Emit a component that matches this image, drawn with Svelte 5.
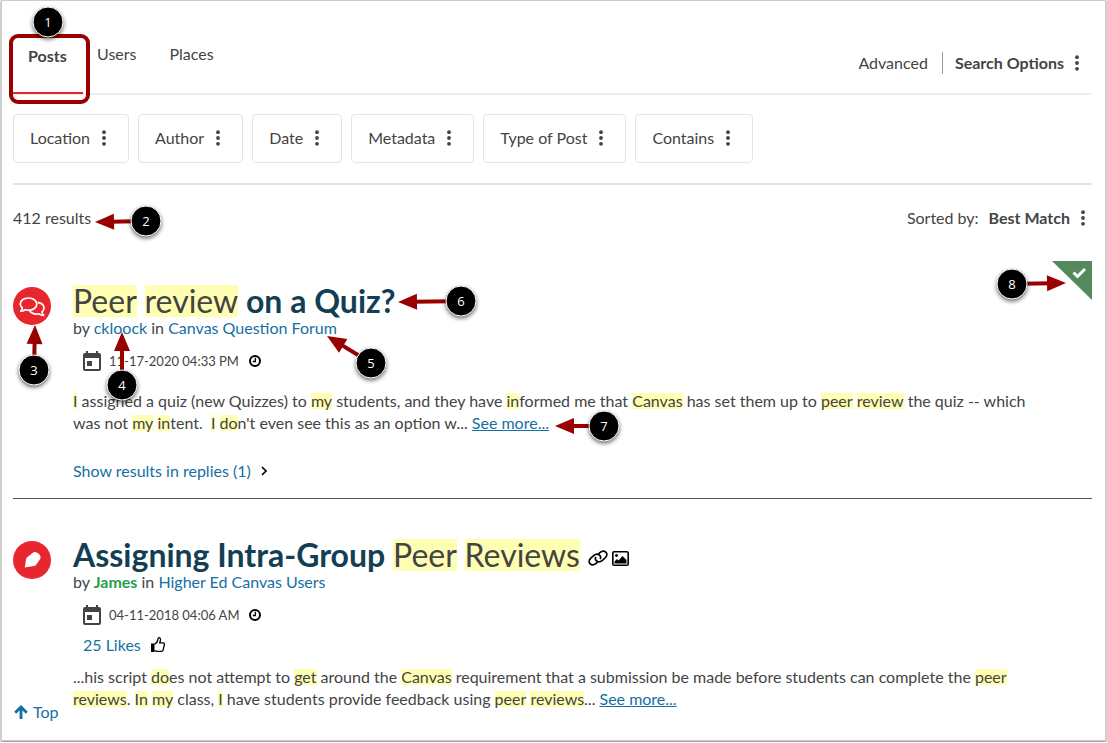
<script>
	const filters = ['Location', 'Author', 'Date', 'Metadata', 'Type of Post', 'Contains'];

	// n: number, cx/cy: badge centre, tx/ty: arrow tip
	const callouts = [
		{ n: 1, cx: 48, cy: 22 },
		{ n: 2, cx: 146, cy: 221, tx: 95, ty: 222 },
		{ n: 3, cx: 34, cy: 370, tx: 35, ty: 325 },
		{ n: 4, cx: 122, cy: 385, tx: 122, ty: 332 },
		{ n: 5, cx: 371, cy: 363, tx: 327, ty: 336 },
		{ n: 6, cx: 461, cy: 301, tx: 398, ty: 302 },
		{ n: 7, cx: 604, cy: 426, tx: 555, ty: 426 }
	];

	// text wrapped in [brackets] is a search hit
	const split = (text) =>
		text
			.split(/(\[[^\]]*\])/)
			.filter((part) => part)
			.map((part) => ({ hit: part[0] === '[', text: part.replace(/[[\]]/g, '') }));

	const angle = (c) => (Math.atan2(c.ty - c.cy, c.tx - c.cx) * 180) / Math.PI;
	const reach = (c) => Math.hypot(c.tx - c.cx, c.ty - c.cy);
</script>

{#snippet marked(text)}{#each split(text) as part}{#if part.hit}<mark>{part.text}</mark>{:else}{part.text}{/if}{/each}{/snippet}

{#snippet dots()}
	<svg class="dots" width="6" height="16" viewBox="0 0 6 16" aria-hidden="true">
		<circle cx="3" cy="2.2" r="1.9" />
		<circle cx="3" cy="8" r="1.9" />
		<circle cx="3" cy="13.8" r="1.9" />
	</svg>
{/snippet}

{#snippet callout(c)}
	<g transform="translate({c.cx} {c.cy})">
		{#if c.tx}
			<g transform="rotate({angle(c)})" fill="#900">
				<rect x="10" y="-2" width={reach(c) - 25} height="4" />
				<path d="M{reach(c)} 0l-19-8v16z" />
			</g>
		{/if}
		<circle class="badge" r="15" />
		<text y="5" text-anchor="middle">{c.n}</text>
	</g>
{/snippet}

{#snippet date(text)}
	<div class="date">
		<svg width="18" height="20" viewBox="0 0 18 20" aria-hidden="true">
			<path fill="#444" fill-rule="evenodd" d="M3 0h2v2h8V0h2v2h1a2 2 0 0 1 2 2v14a2 2 0 0 1-2 2H2a2 2 0 0 1-2-2V4a2 2 0 0 1 2-2h1zM2 7v11h14V7zM4 10h5v5H4z" />
		</svg>
		<time>{text}</time>
		<svg width="12" height="12" viewBox="0 0 12 12" fill="none" stroke="#000" aria-hidden="true">
			<circle cx="6" cy="6" r="5" stroke-width="2" />
			<path d="M6.3 2.8v3.7H3.8" stroke-width="1.3" />
		</svg>
	</div>
{/snippet}

<div class="page">
	<header>
		<nav class="tabs">
			<a class="active" href="#posts">Posts</a>
			<a href="#users">Users</a>
			<a href="#places">Places</a>
		</nav>
		<div class="options">
			<a href="#advanced">Advanced</a>
			<button class="plain">Search Options {@render dots()}</button>
		</div>
	</header>

	<div class="filters">
		{#each filters as filter}
			<button>{filter} {@render dots()}</button>
		{/each}
	</div>

	<div class="summary">
		<span>412 results</span>
		<span class="sort">Sorted by: <button class="plain">Best Match {@render dots()}</button></span>
	</div>

	<article>
		<svg class="avatar" width="38" height="38" viewBox="0 0 38 38" aria-hidden="true">
			<circle cx="19" cy="19" r="19" fill="#e8262d" />
			<g fill="none" stroke="#fff" stroke-width="1.7" stroke-linejoin="round">
				<path d="M15.5 11c4.8 0 8.3 2.6 8.3 6.1s-3.500 6.100-8.300 6.100c-1.200 0-2.200-.2-3.200-.5-1.200.9-2.800 1.500-4.600 1.500 1-1 1.600-2 1.700-3.200-1.400-1.100-2.200-2.400-2.200-3.900 0-3.500 3.500-6.100 8.300-6.100z" />
				<path d="M24.600 15.300c3.700.6 6.400 2.900 6.400 5.800 0 1.500-.7 2.800-2 3.900.1 1.300.7 2.400 1.700 3.400-1.900 0-3.500-.6-4.700-1.600-3.600.9-7.900-.2-9.600-3.300" />
			</g>
		</svg>
		<div class="body">
			<h2><a href="#quiz">{@render marked('[Peer] [review] on a Quiz?')}</a></h2>
			<p class="by">by <a href="#ckloock">ckloock</a> in <a href="#forum">Canvas Question Forum</a></p>
			{@render date('11-17-2020 04:33 PM')}
			<p class="excerpt">
				{@render marked('[I] assigned a quiz (new Quizzes) to [my] students, and they have [in]formed me that [Canvas] has set them up to [peer] [review] the quiz -- which was not [my] [in]tent. \u00a0[I] [do]n\'t even see this as an option w...')}
				<a class="more" href="#more">See more...</a>
			</p>
			<button class="plain replies">
				Show results in replies (1)
				<svg width="7" height="10" viewBox="0 0 7 10" fill="none" stroke="#000" stroke-width="1.7" aria-hidden="true">
					<path d="M1 1l4 4-4 4" />
				</svg>
			</button>
		</div>
		<div class="solved">
			<svg width="40" height="39" viewBox="0 0 40 39" role="img" aria-label="Accepted solution">
				<path d="M0 0h40v39z" fill="#54895c" />
				<path d="M21.5 11.5l4 4 7.5-7.5" fill="none" stroke="#fff" stroke-width="3" />
				{@render callout({ n: 8, cx: -40, cy: 23, tx: 14, ty: 22 })}
			</svg>
		</div>
	</article>

	<article>
		<svg class="avatar" width="38" height="38" viewBox="0 0 38 38" aria-hidden="true">
			<circle cx="19" cy="19" r="19" fill="#e8262d" />
			<path d="M11.800 26.500l1.200-8c.2-1.200.6-1.800 1.500-2.500l5-4c1-.8 2-1.100 3.200-.8 2 .4 3.600 1.700 4.500 3.500.6 1.200.5 2.400-.2 3.500l-3.500 5c-.7 1-1.500 1.500-2.700 1.800z" fill="#fff" />
		</svg>
		<div class="body">
			<h2>
				<a href="#assigning">{@render marked('Assigning Intra-Group [Peer] [Reviews]')}</a>
				<svg width="20" height="16" viewBox="0 0 20 16" fill="none" stroke="#000" stroke-width="1.7" aria-hidden="true">
					<path d="M9.5 12.2l-1.400 1.200c-1.900 1.600-4.300 1.900-5.900.5s-1.300-3.900.4-5.600l3-2.700c1.900-1.600 4.300-1.900 5.900-.5 1.200 1 1.400 2.600.7 4.100" />
					<path d="M10.5 3.8l1.400-1.200c1.900-1.600 4.300-1.900 5.900-.5s1.300 3.900-.4 5.600l-3 2.700c-1.900 1.600-4.300 1.900-5.900.5-1.200-1-1.400-2.600-.7-4.100" />
				</svg>
				<svg width="17" height="15" viewBox="0 0 17 15" aria-hidden="true">
					<rect x=".8" y=".8" width="15.4" height="13.4" rx="1.3" fill="none" stroke="#000" stroke-width="1.6" />
					<circle cx="4.5" cy="4.5" r="1.4" />
					<path d="M2.5 12.5v-2l2.500-2.500 1.500 1.500 4-4.500 4 4v3.500z" />
				</svg>
			</h2>
			<p class="by">by <a class="staff" href="#james">James</a> in <a href="#highered">Higher Ed Canvas Users</a></p>
			{@render date('04-11-2018 04:06 AM')}
			<div class="likes">
				<a href="#likes">25 Likes</a>
				<svg width="14" height="16" viewBox="0 0 14 16" aria-hidden="true">
					<path d="M0 6.5h3.500V15H0z" />
					<path d="M3.5 7.2c1.800-.8 3-2.500 3.300-4.600.2-1.300.6-1.900 1.300-1.900 1 0 1.500.9 1.400 2.200-.1 1.100-.4 2-.9 3h3.500c1 0 1.500.7 1.300 1.600l-1.200 5.300c-.3 1.100-.9 1.600-1.900 1.600H7c-1.300 0-2-.6-3.500-.8" fill="none" stroke="#000" stroke-width="1.3" stroke-linejoin="round" />
				</svg>
			</div>
			<p class="excerpt">
				{@render marked('...his script [do]es not attempt to [get] around the [Canvas] requirement that a submission be made before students can complete the [peer] [reviews]. [In] [my] class, [I] have students provide feedback using [peer] [reviews]...')}
				<a class="more" href="#more">See more...</a>
			</p>
		</div>
	</article>

	<a class="top" href="#top">
		<svg width="14" height="14" viewBox="0 0 14 14" fill="none" stroke="currentColor" stroke-width="2.8" aria-hidden="true">
			<path d="M7 14V2.500M1.200 7.800L7 2l5.800 5.800" />
		</svg>
		Top
	</a>

	<svg class="callouts" aria-hidden="true">
		<rect x="11" y="36" width="77" height="66" rx="7" fill="none" stroke="#900" stroke-width="4" />
		{#each callouts as c}
			{@render callout(c)}
		{/each}
	</svg>
</div>

<style>
	:global(body) {
		background: #fff;
	}

	.page {
		position: relative;
		box-sizing: border-box;
		margin: 1px 2px 2px;
		padding: 0 13px 30px 11px;
		font: 16px/22px Lato, 'Open Sans', sans-serif;
		color: #444;
		box-shadow: 0 0 0 1px #ccc, 0 1px 2px 1px #777;
	}

	a {
		color: #146fa3;
		text-decoration: none;
	}

	button {
		font: inherit;
		color: inherit;
		background: #fff;
		cursor: pointer;
	}

	.plain {
		display: inline-flex;
		align-items: center;
		gap: 10px;
		padding: 0;
		border: none;
		font-weight: bold;
	}

	.dots {
		fill: #444;
	}

	header {
		display: flex;
		justify-content: space-between;
		height: 92px;
		border-bottom: 2px solid #eee;
	}

	.tabs {
		display: flex;
		gap: 33px;
		padding-top: 42px;
	}

	.tabs a,
	.options a {
		color: inherit;
	}

	.tabs .active {
		box-sizing: border-box;
		width: 70px;
		height: 51px;
		margin-right: -19px;
		padding: 2px 15px;
		border-bottom: 2px solid #e22;
		font-weight: bold;
	}

	.options {
		display: flex;
		align-items: center;
		height: 22px;
		padding: 51px 12px 0 0;
	}

	.options a {
		padding-right: 14px;
		margin-right: 12px;
		border-right: 1px solid #999;
	}

	.filters {
		display: flex;
		gap: 9px;
		padding: 19px 0 20px;
		border-bottom: 2px solid #e2e2e2;
	}

	.filters button {
		display: flex;
		align-items: center;
		gap: 11px;
		height: 49px;
		padding: 0 21px 2px 16px;
		border: 1px solid #e4e4e4;
		border-radius: 4px;
	}

	.summary {
		display: flex;
		justify-content: space-between;
		padding: 22px 6px 32px 0;
	}

	.sort {
		display: flex;
		gap: 10px;
	}

	article {
		position: relative;
		display: flex;
		gap: 22px;
		padding: 24px 0 16px;
	}

	article + article {
		padding: 40px 0 0;
		border-top: 1px solid #555;
	}

	.avatar {
		flex: none;
		margin-top: 2px;
	}

	.body {
		flex: 1;
		max-width: 970px;
	}

	h2 {
		display: flex;
		align-items: center;
		gap: 4px;
		margin: 0;
		font-size: 32px;
		line-height: 32px;
		color: #133f55;
	}

	h2 a {
		margin-right: 4px;
		color: inherit;
	}

	h2 svg {
		margin-top: 6px;
	}

	mark {
		display: inline-block;
		line-height: 16px;
		color: #444;
		background: #ffffb3;
	}

	h2 mark {
		line-height: 32px;
		font-weight: normal;
	}

	.by {
		margin: 0;
	}

	.staff {
		color: #1fa04f;
		font-weight: bold;
	}

	.date,
	.likes {
		display: flex;
		align-items: center;
		gap: 10px;
		padding: 11px 0 0 10px;
		font-size: 13px;
	}

	.date svg:first-child {
		margin-right: -2px;
	}

	.likes {
		padding-top: 8px;
		font-size: 16px;
	}

	.excerpt {
		margin: 18px 0 26px;
	}

	.likes + .excerpt {
		margin-top: 10px;
		margin-bottom: 0;
	}

	.more {
		text-decoration: underline;
	}

	.replies {
		color: #146fa3;
		font-weight: normal;
	}

	.solved {
		position: absolute;
		top: 0;
		right: 0;
	}

	.solved svg {
		display: block;
		overflow: visible;
	}

	.top {
		position: absolute;
		left: 12px;
		bottom: 17px;
		display: flex;
		align-items: center;
		gap: 5px;
	}

	.callouts {
		position: absolute;
		top: -1px;
		left: -2px;
		width: 640px;
		height: 460px;
		pointer-events: none;
	}

	.badge {
		fill: #000;
		stroke: #fff;
		stroke-width: 1px;
		filter: drop-shadow(0 2px 2px rgba(0, 0, 0, 0.6));
	}

	text {
		fill: #fff;
		font: 13px 'Open Sans', sans-serif;
	}
</style>
